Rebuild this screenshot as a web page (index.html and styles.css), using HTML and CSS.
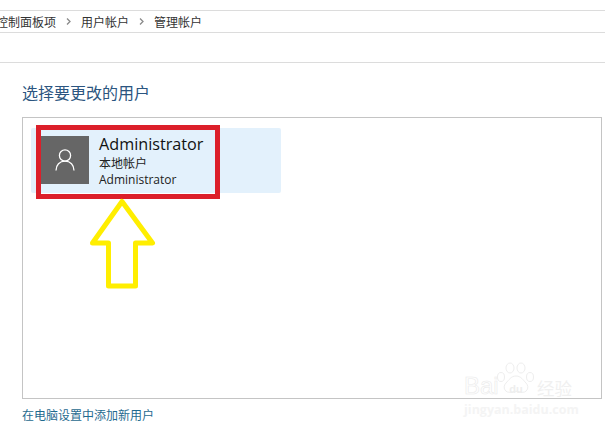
FILE: index.html
```html
<!DOCTYPE html>
<html lang="zh-CN">
<head>
    <meta charset="UTF-8">
    <meta name="viewport" content="width=device-width, initial-scale=1.0">
    <title>管理帐户</title>
    <link rel="stylesheet" href="styles.css">
</head>
<body>
    <nav class="breadcrumb">
        <span>控制面板项</span>
        <svg class="crumb-arrow" width="5" height="7" viewBox="0 0 5 7"><path d="M1 .5 4 3.5 1 6.500" fill="none" stroke="#8a8a8a" stroke-width="1.300"/></svg>
        <span>用户帐户</span>
        <svg class="crumb-arrow" width="5" height="7" viewBox="0 0 5 7"><path d="M1 .5 4 3.5 1 6.500" fill="none" stroke="#8a8a8a" stroke-width="1.300"/></svg>
        <span>管理帐户</span>
    </nav>
    <div class="toolbar"></div>

    <main class="content">
        <h1>选择要更改的用户</h1>
        <div class="user-list">
            <div class="user-item">
                <div class="avatar">
                    <svg width="24" height="24" viewBox="0 0 24 24" fill="none" stroke="#fff" stroke-width="1.300"><circle cx="12" cy="7.500" r="5.600"/><path d="M3 22.500c0-5.500 3.600-9.400 9-9.400s9 3.900 9 9.400"/></svg>
                </div>
                <div class="user-info">
                    <div class="user-name">Administrator</div>
                    <div class="user-line">本地帐户</div>
                    <div class="user-line">Administrator</div>
                </div>
            </div>
        </div>
        <a class="add-user" href="#">在电脑设置中添加新用户</a>
    </main>

    <!-- annotations on top of the screenshot -->
    <div class="red-box"></div>
    <svg class="up-arrow" width="68" height="94" viewBox="0 0 68 94"><path d="M34 4.500 64.500 46H47.500V89H20.500V46H4.500Z" fill="none" stroke="#ffee00" stroke-width="5" stroke-linejoin="round"/></svg>

    <div class="watermark">
        <div class="wm-top">
            <span class="wm-brand">Bai</span>
            <div class="wm-paw">
                <svg width="40" height="34" viewBox="0 0 40 34" fill="none" stroke="#eeeeee" stroke-width="1">
                    <ellipse cx="5" cy="15" rx="3.500" ry="4.500"/>
                    <ellipse cx="14" cy="6" rx="4" ry="5"/>
                    <ellipse cx="25" cy="6" rx="4" ry="5"/>
                    <ellipse cx="34" cy="15" rx="3.500" ry="4.500"/>
                    <path d="M20 14c5 0 7 4 10 7 4 4 1 11-6 9-3-1-5-1-8 0-7 2-10-5-6-9 3-3 5-7 10-7Z"/>
                </svg>
                <span class="wm-du">du</span>
            </div>
            <span class="wm-cn">经验</span>
        </div>
        <div class="wm-url">jingyan.baidu.com</div>
    </div>
</body>
</html>
```

FILE: styles.css
```css
* {
    box-sizing: border-box;
    margin: 0;
    padding: 0;
}

body {
    position: relative;
    width: 605px;
    height: 428px;
    overflow: hidden;
    background-color: white;
    font-family: "Open Sans", "Noto Sans CJK SC", sans-serif;
}

.breadcrumb {
    display: flex;
    align-items: center;
    gap: 10px;
    height: 23px;
    margin-top: 10px;
    margin-left: -4px;
    border-top: 1px solid #dcdcdc;
    border-bottom: 1px solid #dcdcdc;
    font-size: 12px;
    color: #333;
}

.toolbar {
    height: 30px;
    border-bottom: 1px solid #dcdcdc;
}

.content {
    padding: 20px 3px 0 22px;
}

h1 {
    font-size: 16px;
    font-weight: normal;
    line-height: 20px;
    color: #2b5580;
    margin-bottom: 14px;
}

.user-list {
    height: 282px;
    padding: 10px 8px;
    border: 1px solid #c4c4c4;
}

.user-item {
    display: flex;
    gap: 10px;
    width: 250px;
    height: 65px;
    padding: 8px 10px;
    border-radius: 2px;
    background-color: #e3f1fc;
}

.avatar {
    display: flex;
    align-items: center;
    justify-content: center;
    width: 48px;
    height: 48px;
    background-color: #666;
}

.user-name {
    font-size: 16.200px;
    line-height: 17px;
    margin-bottom: 3px;
    color: #111;
}

.user-line {
    font-size: 12px;
    line-height: 16px;
    color: #222;
}

.add-user {
    display: block;
    margin-top: 8px;
    font-size: 12px;
    line-height: 17px;
    color: #1f6a8f;
    text-decoration: none;
}

.red-box {
    position: absolute;
    left: 36px;
    top: 125px;
    width: 184px;
    height: 74px;
    border: 5px solid #dc1f2a;
}

.up-arrow {
    position: absolute;
    left: 88px;
    top: 197px;
}

.watermark {
    position: absolute;
    left: 464px;
    top: 362px;
    width: 112px;
    color: #f4f4f4;
}

.wm-top {
    display: flex;
    align-items: flex-end;
    height: 36px;
    font-family: "Liberation Sans", sans-serif;
}

.wm-brand {
    width: 32px;
    font-size: 24px;
    line-height: 24px;
    color: white;
    -webkit-text-stroke: .6px #eaeaea;
}

.wm-paw {
    display: flex;
    align-items: flex-end;
    justify-content: center;
    width: 40px;
    height: 36px;
    position: relative;
}

.wm-paw svg {
    position: absolute;
    left: 0;
    top: 0;
}

.wm-du {
    position: relative;
    font-size: 11px;
    line-height: 17px;
    font-weight: bold;
    color: #eeeeee;
}

.wm-cn {
    margin-left: 1px;
    font-family: "Noto Sans CJK SC", sans-serif;
    font-size: 17.500px;
    line-height: 20px;
    color: #f0f0f0;
}

.wm-url {
    margin-top: 5px;
    font-size: 12.500px;
    font-weight: bold;
    line-height: 14px;
    white-space: nowrap;
}
```
